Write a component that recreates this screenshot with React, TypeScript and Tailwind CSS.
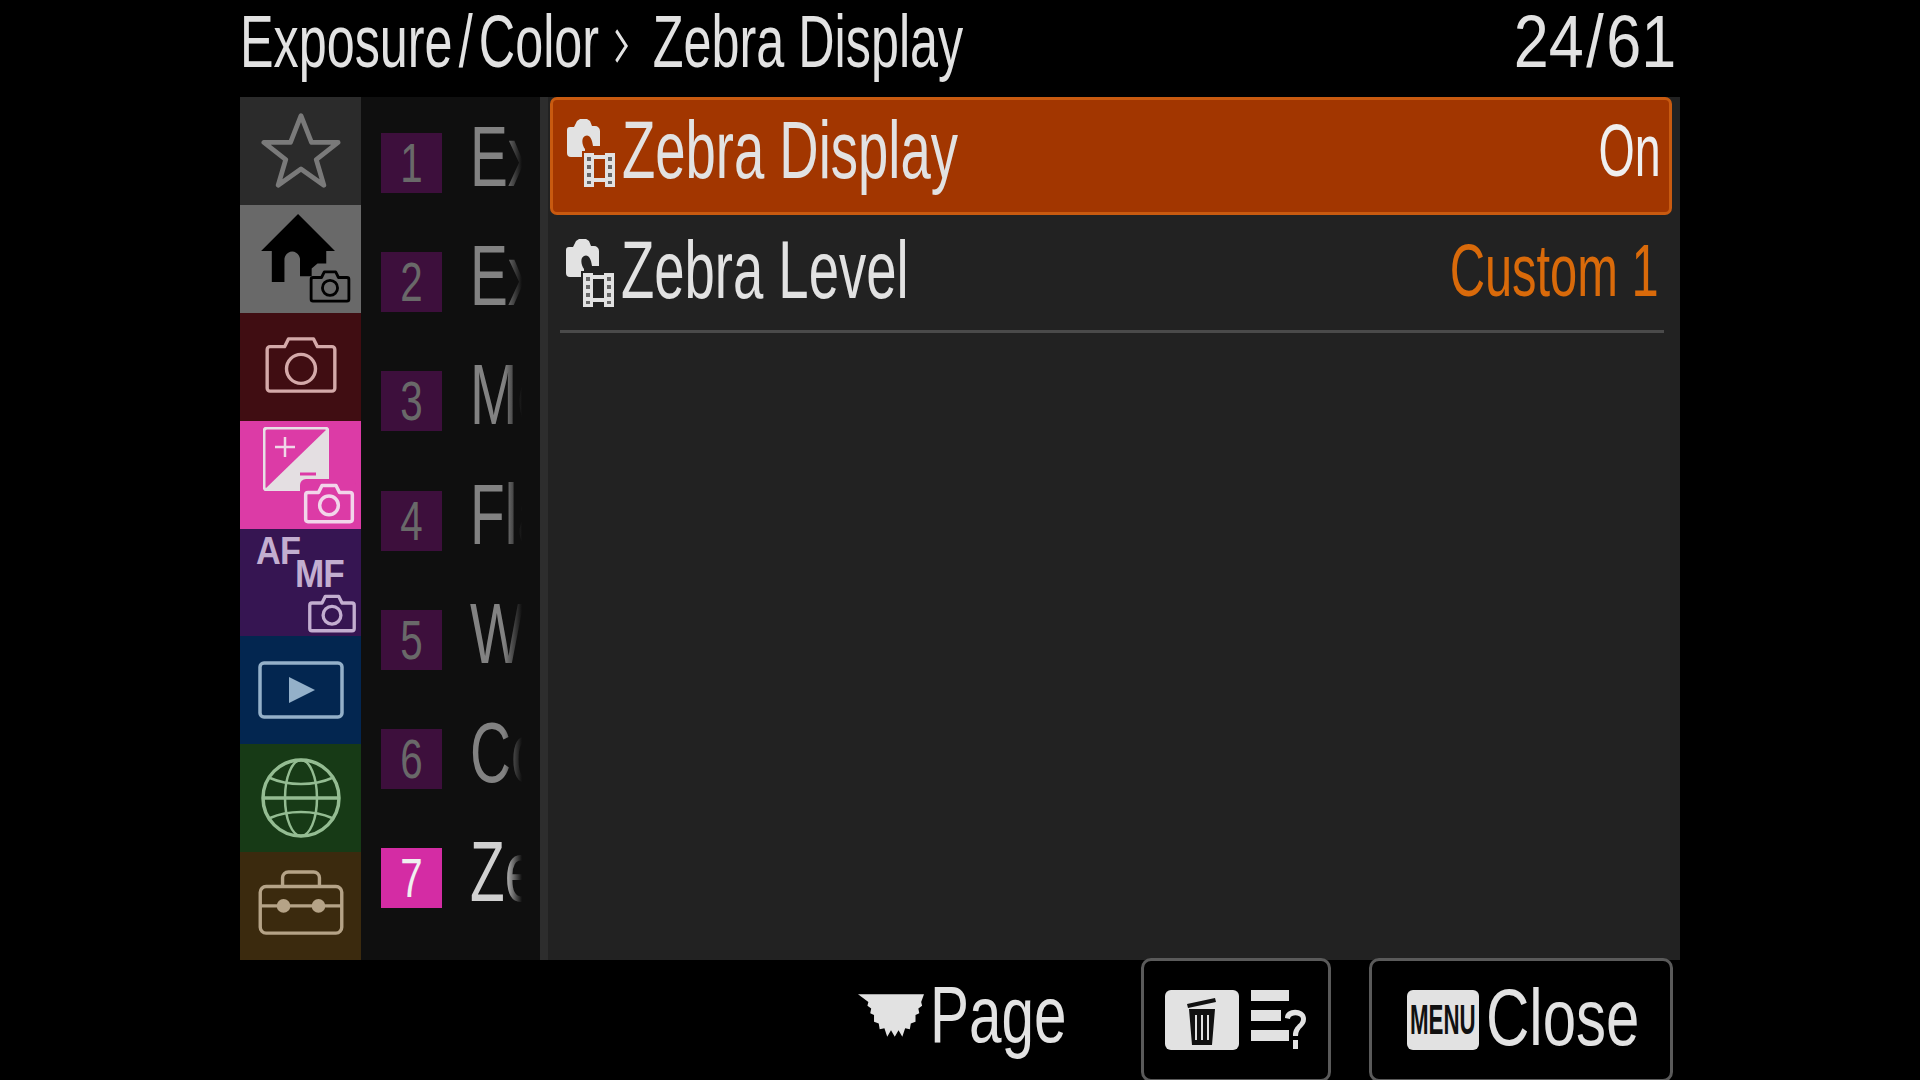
const font = { fontFamily: '"Liberation Sans", Arial, sans-serif' };

function MiniCamera({ color, className }: { color: string; className: string }) {
  return (
    <svg viewBox="0 0 44 36" className={className} fill="none" stroke={color} strokeWidth="3" strokeLinejoin="round">
      <path d="M4 9h9l3-6h12l3 6h9a2 2 0 0 1 2 2v21a2 2 0 0 1-2 2H4a2 2 0 0 1-2-2V11a2 2 0 0 1 2-2z" />
      <circle cx="22" cy="20" r="8" />
    </svg>
  );
}

function RowIcon({ bg }: { bg: string }) {
  return (
    <svg viewBox="0 0 48 68" className="w-[48px] h-[68px] shrink-0" fill="#e2e2e2">
      {/* still camera with the lens bitten out, film strip on top of it */}
      <path d="M3 8h4l3-6 3-2h7l3 2 2 5h3a5 5 0 0 1 5 5v15H26c-1-8-4-12-8-10-4 2-3 9 0 13v8H4a4 4 0 0 1-4-4V11a3 3 0 0 1 3-3z" />
      <rect x="15" y="32" width="33" height="36" fill={bg} />
      <rect x="17" y="34" width="10" height="34" />
      <rect x="38" y="34" width="10" height="34" />
      <rect x="27" y="36" width="11" height="4" />
      <rect x="27" y="59" width="11" height="4" />
      <g fill="#666">
        <rect x="20" y="38" width="4" height="4" />
        <rect x="20" y="46" width="4" height="4" />
        <rect x="20" y="54" width="4" height="4" />
        <rect x="20" y="62" width="4" height="3" />
        <rect x="41" y="38" width="4" height="4" />
        <rect x="41" y="46" width="4" height="4" />
        <rect x="41" y="54" width="4" height="4" />
        <rect x="41" y="62" width="4" height="3" />
      </g>
    </svg>
  );
}

function SideTabs() {
  return (
    <div className="w-[121px] shrink-0 flex flex-col h-full">
      <div className="h-[108px] bg-[#2b2b2b] flex items-center justify-center pb-[2px]">
        <svg viewBox="0 0 84 80" className="w-[80px] h-[78px]" fill="none" stroke="#7a7a7a" strokeWidth="5" strokeLinejoin="round">
          <path d="M42 4l11 28h28L58 50l8 27-24-17-24 17 8-27L3 32h28z" />
        </svg>
      </div>
      <div className="h-[108px] bg-[#696969] relative">
        <svg viewBox="0 0 80 72" className="absolute left-[21px] top-[9px] w-[78px] h-[70px]" fill="#000">
          <path d="M38 0l38 38h-9v13h-9l-6 5v8H40V46c-2-10-14-10-16 0v24H11V38H0z" />
        </svg>
        <MiniCamera color="#000" className="absolute left-[68px] top-[64px] w-[44px] h-[34px]" />
      </div>
      <div className="h-[108px] bg-[#400d12] flex items-center justify-center pb-[4px]">
        <svg viewBox="0 0 74 60" className="w-[72px] h-[58px]" fill="none" stroke="#d4a9a9" strokeWidth="3.5" strokeLinejoin="round">
          <path d="M5 11h15l4-8h26l4 8h15a3 3 0 0 1 3 3v40a3 3 0 0 1-3 3H5a3 3 0 0 1-3-3V14a3 3 0 0 1 3-3z" />
          <circle cx="37" cy="34" r="15" />
        </svg>
      </div>
      <div className="h-[108px] bg-[#dc3ba6] relative">
        <svg viewBox="0 0 66 64" className="absolute left-[23px] top-[6px] w-[66px] h-[64px]">
          <path d="M4 1h58a3 3 0 0 1 3 3v56a3 3 0 0 1-3 3H4a3 3 0 0 1-3-3V4a3 3 0 0 1 3-3z" fill="#dc3ba6" stroke="#e8e0e6" strokeWidth="3" />
          <path d="M65 1v59a3 3 0 0 1-3 3H1z" fill="#e4dfe2" />
          <path d="M12 20h20M22 10v20" stroke="#f0d8e8" strokeWidth="2.5" />
          <path d="M37 47h16" stroke="#dc3ba6" strokeWidth="3" />
        </svg>
        <div className="absolute left-[60px] top-[58px] w-[56px] h-[46px] bg-[#dc3ba6] rounded-md" />
        <MiniCamera color="#f2d5ea" className="absolute left-[63px] top-[61px] w-[52px] h-[42px]" />
      </div>
      <div className="h-[108px] bg-[#361552] relative font-bold text-[#c3aed0]" style={font}>
        <span className="absolute left-[16px] top-[-1px] text-[39px] leading-[46px] tracking-[-1px] origin-left scale-x-[0.88]">AF</span>
        <span className="absolute left-[55px] top-[22px] text-[39px] leading-[46px] tracking-[-1px] origin-left scale-x-[0.9]">MF</span>
        <MiniCamera color="#c3aed0" className="absolute left-[67px] top-[64px] w-[50px] h-[40px]" />
      </div>
      <div className="h-[108px] bg-[#032650] flex items-center justify-center">
        <svg viewBox="0 0 86 58" className="w-[86px] h-[58px]" fill="none" stroke="#94b0c9" strokeWidth="3.5" strokeLinejoin="round">
          <rect x="2" y="2" width="82" height="54" rx="4" />
          <path d="M31 16l26 13-26 13z" fill="#94b0c9" stroke="none" />
        </svg>
      </div>
      <div className="h-[108px] bg-[#173a16] flex items-center justify-center">
        <svg viewBox="0 0 80 80" className="w-[80px] h-[80px]" fill="none" stroke="#94bc92" strokeWidth="2.5">
          <circle cx="40" cy="40" r="38" strokeWidth="3.5" />
          <ellipse cx="40" cy="40" rx="16" ry="38" />
          <path d="M2 40h76" strokeWidth="3.5" />
          <path d="M9 20c18 8 44 8 62 0M9 60c18-8 44-8 62 0" />
        </svg>
      </div>
      <div className="h-[108px] bg-[#3b2a0e] flex items-center justify-center pb-[6px]">
        <svg viewBox="0 0 88 68" className="w-[86px] h-[66px]" fill="none" stroke="#b5a387" strokeWidth="3.5" strokeLinejoin="round">
          <path d="M25 17V8a6 6 0 0 1 6-6h26a6 6 0 0 1 6 6v9" />
          <rect x="2" y="17" width="84" height="48" rx="6" />
          <path d="M2 37h84" />
          <circle cx="26" cy="37" r="7" fill="#b5a387" stroke="none" />
          <circle cx="62" cy="37" r="7" fill="#b5a387" stroke="none" />
        </svg>
      </div>
    </div>
  );
}

function SubTabs() {
  const items = [
    { n: "1", label: "Ex" },
    { n: "2", label: "Ex" },
    { n: "3", label: "Me" },
    { n: "4", label: "Fla" },
    { n: "5", label: "Wh" },
    { n: "6", label: "Col" },
    { n: "7", label: "Zeb", active: true },
  ];
  return (
    <div className="w-[179px] shrink-0 bg-[#0f0f0f] pt-[6px] pl-[20px] grid grid-rows-[repeat(7,119.3px)] h-full">
      {items.map((item) => (
        <div key={item.n} className="flex items-center">
          <div className={`w-[61px] h-[60px] shrink-0 flex items-center justify-center text-[56px] leading-none ${item.active ? "bg-[#d42ca4] text-[#f0f0f0]" : "bg-[#3d0f3c] text-[#696969]"}`}>
            <span className="inline-block scale-x-[0.72]">{item.n}</span>
          </div>
          <div className={`relative ml-[28px] w-[52px] h-[84px] overflow-hidden text-[86px] leading-[84px] whitespace-nowrap -mt-[14px] ${item.active ? "text-[#d0d0d0]" : "text-[#828282]"}`}>
            <span className="inline-block origin-left scale-x-[0.66]">{item.label}</span>
            <div className="absolute right-0 top-0 bottom-0 w-[18px] bg-gradient-to-r from-transparent to-[#0f0f0f]" />
          </div>
        </div>
      ))}
    </div>
  );
}

function SettingRow({ label, value, active }: { label: string; value: string; active?: boolean }) {
  return (
    <div className={`flex items-center justify-between h-[118px] ${active ? "ml-[2px] mr-[8px] pl-[14px] pr-[8px] bg-[#a23600] border-[3px] border-[#c85a10] rounded-[7px]" : "ml-[12px] mr-[16px] pl-[6px] pr-[5px] border-b-[3px] border-[#4a4a4a]"}`}>
      <div className={`flex items-center ${active ? "-mt-[7px]" : ""}`}>
        <RowIcon bg={active ? "#a23600" : "#222222"} />
        <span className="inline-block origin-left scale-x-[0.664] text-[82px] leading-none text-[#e2e2e2] whitespace-nowrap ml-[7px] -mt-[6px]">{label}</span>
      </div>
      <span className={`inline-block origin-right text-[74px] leading-none whitespace-nowrap ${active ? "scale-x-[0.63] text-[#efefef] -mt-[10px]" : "scale-x-[0.66] text-[#d96a0a] -mt-[4px]"}`}>{value}</span>
    </div>
  );
}

export default function App() {
  return (
    <div className="w-[1920px] h-[1080px] bg-black overflow-hidden pl-[240px] pr-[240px] flex flex-col text-[#e2e2e2]" style={font}>
      <div className="h-[97px] shrink-0 flex justify-between items-start pr-[4px]">
        <span className="inline-flex items-center origin-left scale-x-[0.68] text-[74px] leading-[84px] whitespace-nowrap">
          Exposure<span className="mx-[9px]">/</span>Color
          <svg viewBox="0 0 24 44" className="w-[30px] h-[34px] ml-[18px] mr-[31px] mt-[8px]" fill="none" stroke="#e2e2e2" strokeWidth="5"><path d="M2 2l19 20L2 42" /></svg>
          Zebra Display
        </span>
        <span className="inline-block origin-right scale-x-[0.85] text-[74px] leading-[84px]">24<span className="mx-[3px]">/</span>61</span>
      </div>

      <div className="h-[863px] shrink-0 flex">
        <SideTabs />
        <SubTabs />
        <div className="w-[8px] shrink-0 bg-[#2d2d2d]" />
        <div className="flex-1 bg-[#222222]">
          <SettingRow label="Zebra Display" value="On" active />
          <SettingRow label="Zebra Level" value="Custom 1" />
        </div>
      </div>

      <div className="flex-1 flex justify-end items-start pr-[7px] -mt-[2px]">
        <div className="flex items-center h-[118px] mr-[75px]">
          <svg viewBox="0 0 70 48" className="w-[66px] h-[48px] mr-[6px]" fill="#e2e2e2">
            <path d="M0 0h70l-3 8 1 4-4 3 1 5-4 2v7l-5 2-1 6-5-1-3 9-4-7-4 7-4-7-4 7-3-9-5 1-1-6-5-2v-7l-4-2 1-5-4-3 1-4z" />
          </svg>
          <span className="inline-block origin-left scale-x-[0.73] text-[80px] leading-none w-[136px] whitespace-nowrap -mt-[4px]">Page</span>
        </div>
        <div className="w-[190px] h-[124px] border-[3px] border-[#5a5a5a] rounded-[10px] flex items-center justify-center gap-[12px] mr-[38px]">
          <svg viewBox="0 0 74 60" className="w-[74px] h-[60px]">
            <rect width="74" height="60" rx="6" fill="#e2e2e2" />
            <path d="M22 14l28-6 1 4-28 6z M24 19h26l-3 36H27z" fill="#111" />
            <path d="M31 25v25M37 25v25M43 25v25" stroke="#e2e2e2" strokeWidth="2" />
          </svg>
          <svg viewBox="0 0 56 60" className="w-[56px] h-[60px]" fill="#e2e2e2">
            <rect x="0" y="0" width="38" height="11" />
            <rect x="0" y="20" width="30" height="11" />
            <rect x="0" y="40" width="38" height="11" />
            <path d="M34 28c0-11 21-11 21 1 0 8-8 8-8 17h-5c0-11 8-11 8-17 0-5-11-5-11 0z M42 50h5v9h-5z" />
          </svg>
        </div>
        <div className="w-[304px] h-[124px] border-[3px] border-[#5a5a5a] rounded-[10px] flex items-center pl-[35px]">
          <div className="w-[72px] h-[60px] bg-[#e2e2e2] rounded-[6px] text-[#111] flex items-center justify-center text-[42px] font-bold leading-none shrink-0">
            <span className="inline-block scale-x-[0.53]">MENU</span>
          </div>
          <span className="inline-block origin-left scale-x-[0.75] text-[80px] leading-none ml-[7px] -mt-[4px]">Close</span>
        </div>
      </div>
    </div>
  );
}
